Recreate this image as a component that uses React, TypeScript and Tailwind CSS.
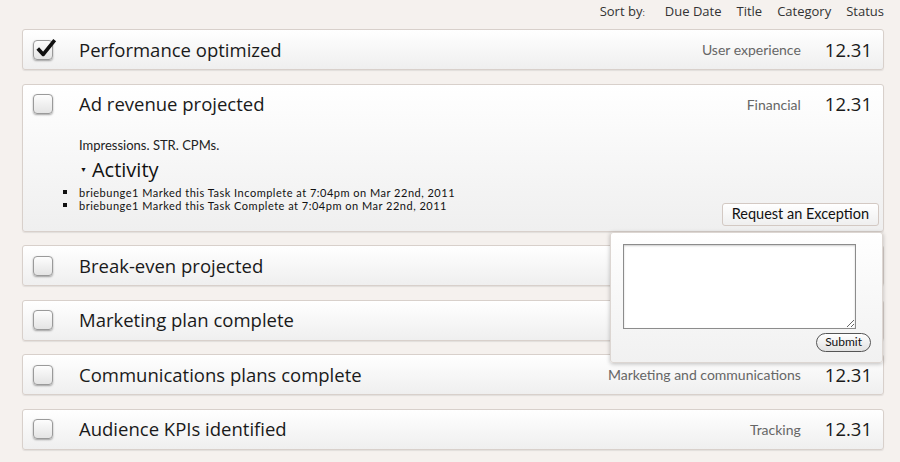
import { useState } from 'react'

type Task = {
  title: string
  category: string
  done?: boolean
  open?: boolean
}

const tasks: Task[] = [
  { title: 'Performance optimized', category: 'User experience', done: true },
  { title: 'Ad revenue projected', category: 'Financial', open: true },
  { title: 'Break-even projected', category: '' },
  { title: 'Marketing plan complete', category: '' },
  { title: 'Communications plans complete', category: 'Marketing and communications' },
  { title: 'Audience KPIs identified', category: 'Tracking' },
]

const activity = [
  'briebunge1 Marked this Task Incomplete at 7:04pm on Mar 22nd, 2011',
  'briebunge1 Marked this Task Complete at 7:04pm on Mar 22nd, 2011',
]

function Checkbox({ checked }: { checked?: boolean }) {
  return (
    <div className="relative w-[20px] h-[20px] shrink-0 rounded-[4px] border border-[#9a9a9a] bg-gradient-to-b from-[#fdfdfd] to-[#e4e4e4] shadow-[0_1px_2px_rgba(0,0,0,0.35)]">
      {checked && (
        <svg viewBox="0 0 24 24" className="absolute left-[1px] -top-[4px] w-[22px] h-[22px]">
          <path d="M3 12.5 L9 19 L21.5 3.5" fill="none" stroke="#111" strokeWidth="4" strokeLinejoin="round" />
        </svg>
      )}
    </div>
  )
}

function Meta({ category }: { category: string }) {
  return (
    <div className="ml-auto flex items-center gap-[24px] pr-[11px]">
      {category && <span className="font-['Lato'] text-[14px] text-[#666]">{category}</span>}
      <span className="font-['Open_Sans'] text-[18.5px] text-[#1a1a1a]">12.31</span>
    </div>
  )
}

function ExceptionPopover() {
  const [text, setText] = useState('')
  return (
    <div className="absolute right-0 top-[calc(100%+1px)] z-10 w-[273px] h-[131px] rounded-[3px] border border-[#dcd6d2] bg-gradient-to-b from-white to-[#f1f1f1] shadow-[0_1px_4px_rgba(0,0,0,0.25)] px-[12px] pt-[11px] flex flex-col items-end">
      <textarea
        value={text}
        onChange={(e) => setText(e.target.value)}
        className="w-[233px] h-[85px] self-start border border-[#8c8c8c] bg-white shadow-[inset_0_1px_2px_rgba(0,0,0,0.2)] outline-none"
      />
      <button
        type="button"
        className="mt-[4px] mr-[-1px] h-[19px] px-[8px] rounded-full border border-[#555] bg-gradient-to-b from-white to-[#e2e2e2] font-['Lato'] text-[12px] leading-[16px] text-[#111]"
      >
        Submit
      </button>
    </div>
  )
}

function TaskCard({ task }: { task: Task }) {
  return (
    <div className="relative rounded-[3px] border border-[#d8d0cb] bg-gradient-to-b from-white to-[#efefef] shadow-[0_1px_1px_rgba(0,0,0,0.08)]">
      <div className="h-[39px] flex items-center pl-[10px]">
        <Checkbox checked={task.done} />
        <span className="ml-[26px] font-['Open_Sans'] text-[18.5px] text-[#1a1a1a]">{task.title}</span>
        <Meta category={task.category} />
      </div>
      {task.open && (
        <div className="pb-[5px]">
          <div className="pl-[56px] mt-[12px] font-['Lato'] text-[13px] leading-[18px] text-[#222]">Impressions. STR. CPMs.</div>
          <div className="pl-[57px] mt-[4px] flex items-center gap-[5px] font-['Open_Sans'] text-[20px] leading-[24px] text-[#111]">
            <span className="text-[7px]">▼</span>
            <span>Activity</span>
          </div>
          <ul className="pl-[40px] mt-[4px] font-['Lato'] text-[11px] leading-[13px] tracking-[0.5px] text-[#111]">
            {activity.map((a) => (
              <li key={a} className="flex items-center gap-[12px]">
                <span className="w-[4px] h-[4px] bg-[#111]" />
                {a}
              </li>
            ))}
          </ul>
          <div className="flex justify-end pr-[4px] -mt-[9px]">
            <button
              type="button"
              className="h-[23px] px-[9px] rounded-[3px] border border-[#d3c9c3] bg-gradient-to-b from-white to-[#efefef] font-['Lato'] text-[14.5px] leading-[20px] text-[#111]"
            >
              Request an Exception
            </button>
          </div>
          <ExceptionPopover />
        </div>
      )}
    </div>
  )
}

export default function App() {
  return (
    <div className="min-h-[462px] bg-[#f5f1ee] pl-[22px] pr-[16px]">
      <div className="h-[29px] flex justify-end items-start pt-[2px] gap-[15px] font-['Open_Sans'] text-[13px] text-[#333]">
        <span className="mr-[5px]">
          Sort by<span className="text-[9px]">:</span>
        </span>
        <span>Due Date</span>
        <span>Title</span>
        <span>Category</span>
        <span>Status</span>
      </div>
      <div className="flex flex-col gap-[13.5px]">
        {tasks.map((t) => (
          <TaskCard key={t.title} task={t} />
        ))}
      </div>
    </div>
  )
}
